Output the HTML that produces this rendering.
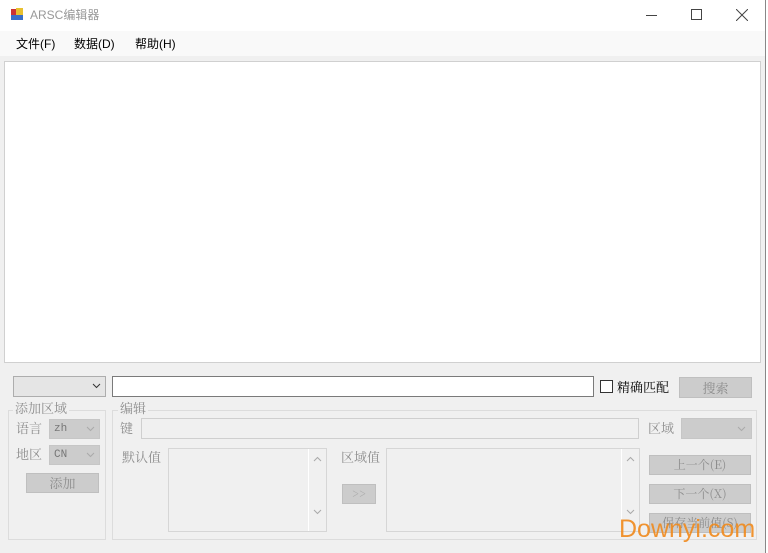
<!DOCTYPE html><html><head><meta charset="utf-8"><style>
body{margin:0;width:768px;height:553px;background:#f0f0f0;position:relative;overflow:hidden;font-family:"Liberation Sans","Noto Sans CJK SC",sans-serif;font-size:12px;color:#000}
.a{position:absolute;box-sizing:border-box}
.t{position:absolute;white-space:nowrap;line-height:14px}
.g{color:#8d8d8d;font-family:"Noto Serif CJK SC","Liberation Serif",serif;font-size:13px}
.btn{background:#cccccc;border:1px solid #bfbfbf;color:#8d8d8d;text-align:center;font-family:"Noto Serif CJK SC","Liberation Serif",serif;font-size:12px}
.cb{background:#cccccc;border:1px solid #c6c6c6;color:#777;font-family:"Liberation Mono",monospace;font-size:11px;padding-left:4px}
.grp{border:1px solid #dcdcdc}
</style></head><body>
<div class="a" style="left:0;top:0;width:766px;height:31px;background:#fff"></div>
<div class="a" style="left:11px;top:9px;width:6px;height:6px;background:#c33"></div>
<div class="a" style="left:16px;top:8px;width:7px;height:7px;background:#e8c030"></div>
<div class="a" style="left:11px;top:15px;width:12px;height:5px;background:#3a6fc8"></div>
<div class="t" style="left:30px;top:8px;color:#999;font-size:12px">ARSC编辑器</div>
<div class="a" style="left:646px;top:15px;width:11px;height:1px;background:#444"></div>
<div class="a" style="left:691px;top:9px;width:11px;height:11px;border:1px solid #444"></div>
<svg class="a" style="left:736px;top:9px" width="12" height="12"><path d="M0 0L12 12M12 0L0 12" stroke="#444" stroke-width="1"/></svg>
<div class="a" style="left:0;top:31px;width:766px;height:25px;background:#f9f9f9"></div>
<div class="t" style="left:16px;top:37px">文件(F)</div>
<div class="t" style="left:74px;top:37px">数据(D)</div>
<div class="t" style="left:135px;top:37px">帮助(H)</div>
<div class="a" style="left:765px;top:0;width:1px;height:553px;background:#888"></div>
<div class="a" style="left:766px;top:0;width:2px;height:553px;background:#fff"></div>
<div class="a" style="left:4px;top:61px;width:757px;height:302px;background:#fff;border:1px solid #d0d0d0"></div>
<div class="a" style="left:13px;top:376px;width:93px;height:21px;background:#e5e5e5;border:1px solid #adadad"></div>
<svg class="a" style="left:92px;top:383px" width="9" height="6"><path d="M1 1L4.5 4.5L8 1" stroke="#333" fill="none"/></svg>
<div class="a" style="left:112px;top:376px;width:482px;height:21px;background:#fff;border:1px solid #7a7a7a"></div>
<div class="a" style="left:600px;top:380px;width:13px;height:13px;background:#fff;border:1px solid #333"></div>
<div class="t" style="left:617px;top:380px;font-family:'Noto Serif CJK SC',serif;font-size:13px">精确匹配</div>
<div class="a btn" style="left:679px;top:377px;width:73px;height:21px;line-height:19px;font-size:13px">搜索</div>
<div class="a grp" style="left:8px;top:410px;width:98px;height:130px"></div>
<div class="t g" style="left:13px;top:401px;background:#f0f0f0;padding:0 2px">添加区域</div>
<div class="t g" style="left:16px;top:421px">语言</div>
<div class="a cb" style="left:49px;top:419px;width:51px;height:20px;line-height:18px">zh</div>
<svg class="a" style="left:86px;top:426px" width="9" height="6"><path d="M1 1L4.5 4.5L8 1" stroke="#aaa" fill="none"/></svg>
<div class="t g" style="left:16px;top:447px">地区</div>
<div class="a cb" style="left:49px;top:445px;width:51px;height:20px;line-height:18px">CN</div>
<svg class="a" style="left:86px;top:452px" width="9" height="6"><path d="M1 1L4.5 4.5L8 1" stroke="#aaa" fill="none"/></svg>
<div class="a btn" style="left:26px;top:473px;width:73px;height:20px;line-height:18px;font-size:13px">添加</div>
<div class="a grp" style="left:112px;top:410px;width:645px;height:130px"></div>
<div class="t g" style="left:118px;top:401px;background:#f0f0f0;padding:0 2px">编辑</div>
<div class="t g" style="left:120px;top:421px">键</div>
<div class="a" style="left:141px;top:418px;width:498px;height:21px;border:1px solid #cfcfcf;background:#f0f0f0"></div>
<div class="t g" style="left:648px;top:421px">区域</div>
<div class="a cb" style="left:681px;top:418px;width:71px;height:21px"></div>
<svg class="a" style="left:737px;top:426px" width="9" height="6"><path d="M1 1L4.5 4.5L8 1" stroke="#aaa" fill="none"/></svg>
<div class="t g" style="left:122px;top:450px">默认值</div>
<div class="a" style="left:168px;top:448px;width:159px;height:84px;border:1px solid #d6d6d6"></div>
<div class="a" style="left:308px;top:449px;width:1px;height:82px;background:#fff"></div>
<svg class="a" style="left:313px;top:456px" width="9" height="60"><path d="M1 5L4.5 1.5L8 5M1 54L4.5 57.5L8 54" stroke="#aaa" fill="none"/></svg>
<div class="t g" style="left:341px;top:450px">区域值</div>
<div class="a btn" style="left:342px;top:484px;width:34px;height:20px;line-height:18px;color:#aaa">&gt;&gt;</div>
<div class="a" style="left:386px;top:448px;width:254px;height:84px;border:1px solid #d6d6d6"></div>
<div class="a" style="left:621px;top:449px;width:1px;height:82px;background:#fff"></div>
<svg class="a" style="left:626px;top:456px" width="9" height="60"><path d="M1 5L4.5 1.5L8 5M1 54L4.5 57.5L8 54" stroke="#aaa" fill="none"/></svg>
<div class="a btn" style="left:649px;top:455px;width:102px;height:20px;line-height:18px">上一个(E)</div>
<div class="a btn" style="left:649px;top:484px;width:102px;height:20px;line-height:18px">下一个(X)</div>
<div class="a btn" style="left:649px;top:513px;width:102px;height:20px;line-height:18px">保存当前值(S)</div>
<div class="t" style="left:619px;top:515px;font-size:25px;line-height:28px;color:#f08a1c;opacity:.9">Downyi.com</div>
</body></html>
